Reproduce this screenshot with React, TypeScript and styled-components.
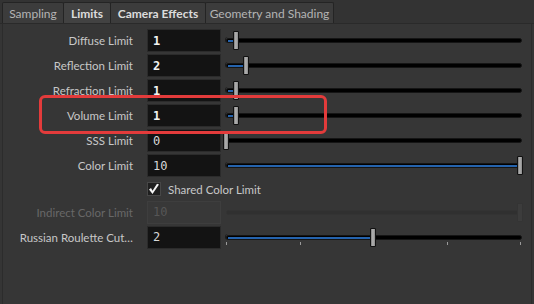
import React from "react";
import styled, { createGlobalStyle } from "styled-components";

const GlobalStyle = createGlobalStyle`
  html, body {
    margin: 0;
    padding: 0;
    background: #353535;
  }
  body {
    font-family: Lato, "Noto Sans", sans-serif;
    font-size: 12px;
    color: #c8c8c8;
  }
`;

const Frame = styled.div`
  width: 534px;
  height: 304px;
  display: flex;
  flex-direction: column;
  background: #353535;
  overflow: hidden;
`;

const TabBar = styled.div`
  display: flex;
  padding: 2px 0 0 2px;
  height: 21px;
  border-bottom: 1px solid #2a2a2a;
  background: #333333;
`;

const Tab = styled.div<{ $active?: boolean; $bold?: boolean; $w: number }>`
  width: ${(p) => p.$w}px;
  box-sizing: border-box;
  display: flex;
  align-items: center;
  justify-content: center;
  background: ${(p) => (p.$active ? "#424242" : "#3c3c3c")};
  border: 1px solid #242424;
  border-bottom: none;
  margin-right: -1px;
  border-radius: 2px 2px 0 0;
  color: ${(p) => (p.$active || p.$bold ? "#dcdcdc" : "#b4b4b4")};
  font-weight: ${(p) => (p.$active || p.$bold ? 700 : 400)};
  font-size: 12px;
`;

const Panel = styled.div`
  position: relative;
  flex: 1;
  margin: 0 2px 0 2px;
  padding-top: 4px;
  border-left: 1px solid #2c2c2c;
  border-right: 1px solid #2c2c2c;
  background: #363636;
`;

const Row = styled.div<{ $h?: number }>`
  display: flex;
  align-items: center;
  height: ${(p) => p.$h ?? 25}px;
`;

const Label = styled.div<{ $disabled?: boolean }>`
  width: 130px;
  margin-right: 14px;
  text-align: right;
  white-space: nowrap;
  font-size: 11.5px;
  color: ${(p) => (p.$disabled ? "#686868" : "#c8c8c8")};
`;

const Field = styled.div<{ $bold?: boolean; $disabled?: boolean }>`
  width: 74px;
  height: 23px;
  box-sizing: border-box;
  display: flex;
  align-items: center;
  padding-left: 5px;
  background: ${(p) => (p.$disabled ? "#383838" : "#131313")};
  border: 1px solid ${(p) => (p.$disabled ? "#3e3e3e" : "#2b2b2b")};
  font-family: "DejaVu Sans Mono", "Liberation Mono", monospace;
  font-size: 12px;
  font-weight: ${(p) => (p.$bold ? 700 : 400)};
  color: ${(p) => (p.$disabled ? "#565656" : p.$bold ? "#f2f2f2" : "#d8d8d8")};
`;

const SliderBox = styled.div`
  position: relative;
  margin-left: 4px;
  width: 297px;
  height: 23px;
`;

const Bracket = styled.div`
  position: absolute;
  left: 0;
  top: 8px;
  width: 3px;
  height: 6px;
  border-left: 1px solid #1c1c1c;
  border-radius: 3px 0 0 3px;
`;

const Track = styled.div<{ $disabled?: boolean }>`
  position: absolute;
  left: 1px;
  right: 0;
  top: 9px;
  height: 5px;
  box-sizing: border-box;
  border-radius: 3px;
  background: ${(p) => (p.$disabled ? "#303030" : "#000")};
  border: 1px solid ${(p) => (p.$disabled ? "#333" : "#151515")};
`;

const Fill = styled.div`
  position: absolute;
  left: 1px;
  top: 1px;
  height: 2px;
  background: #2563ad;
`;

const Handle = styled.div<{ $disabled?: boolean }>`
  position: absolute;
  top: 2px;
  width: 6px;
  height: 19px;
  margin-left: -3px;
  box-sizing: border-box;
  border: 1px solid ${(p) => (p.$disabled ? "#343434" : "#111")};
  border-radius: 1px;
  background: ${(p) =>
    p.$disabled
      ? "#3c3c3c"
      : "linear-gradient(to right, #7c7c7c, #b4b4b4 45%, #8a8a8a)"};
`;

const Tick = styled.div`
  position: absolute;
  top: 16px;
  width: 1px;
  height: 3px;
  background: #9a9a9a;
`;

const Check = styled.div`
  width: 14px;
  height: 14px;
  box-sizing: border-box;
  margin-left: 144px;
  margin-right: 7px;
  background: #1f1f1f;
  border: 1px solid #474747;
  display: flex;
  align-items: center;
  justify-content: center;
`;

const CheckText = styled.span`
  color: #c8c8c8;
  font-size: 11.5px;
`;

const Highlight = styled.div`
  position: absolute;
  left: 36px;
  top: 71px;
  width: 288px;
  height: 39px;
  box-sizing: border-box;
  border: 3px solid #e33b3b;
  border-radius: 6px;
  pointer-events: none;
`;

function Slider({
  pos,
  ticks,
  disabled,
}: {
  pos: number;
  ticks?: number[];
  disabled?: boolean;
}) {
  const x = 1 + pos * 294;
  return (
    <SliderBox>
      {!disabled && <Bracket />}
      <Track $disabled={disabled}>
        {!disabled && pos > 0 && <Fill style={{ width: x - 3 }} />}
      </Track>
      {ticks?.map((t) => (
        <Tick key={t} style={{ left: 1 + t * 294 }} />
      ))}
      <Handle $disabled={disabled} style={{ left: x }} />
    </SliderBox>
  );
}

const rows = [
  { label: "Diffuse Limit", value: "1", bold: true, pos: 1 / 30 },
  { label: "Reflection Limit", value: "2", bold: true, pos: 2 / 30 },
  { label: "Refraction Limit", value: "1", bold: true, pos: 1 / 30 },
  { label: "Volume Limit", value: "1", bold: true, pos: 1 / 30 },
  { label: "SSS Limit", value: "0", bold: false, pos: 0 },
  { label: "Color Limit", value: "10", bold: false, pos: 1 },
];

export default function App() {
  return (
    <Frame>
      <GlobalStyle />
      <TabBar>
        <Tab $w={62}>Sampling</Tab>
        <Tab $w={48} $active>
          Limits
        </Tab>
        <Tab $w={96} $bold>
          Camera Effects
        </Tab>
        <Tab $w={129}>Geometry and Shading</Tab>
      </TabBar>
      <Panel>
        {rows.map((r) => (
          <Row key={r.label}>
            <Label>{r.label}</Label>
            <Field $bold={r.bold}>{r.value}</Field>
            <Slider pos={r.pos} />
          </Row>
        ))}
        <Row $h={22}>
          <Check>
            <svg width="12" height="12" viewBox="0 0 12 12">
              <path
                d="M1 6.5 L4.5 11 L11 1.5 L9 0.8 L4.5 7.8 L3 5 Z"
                fill="#f4f4f4"
              />
            </svg>
          </Check>
          <CheckText>Shared Color Limit</CheckText>
        </Row>
        <Row $h={24}>
          <Label $disabled>Indirect Color Limit</Label>
          <Field $disabled>10</Field>
          <Slider pos={1} disabled />
        </Row>
        <Row $h={26}>
          <Label>Russian Roulette Cut…</Label>
          <Field>2</Field>
          <Slider pos={0.5} ticks={[0, 0.25, 0.75, 1]} />
        </Row>
        <Highlight />
      </Panel>
    </Frame>
  );
}
